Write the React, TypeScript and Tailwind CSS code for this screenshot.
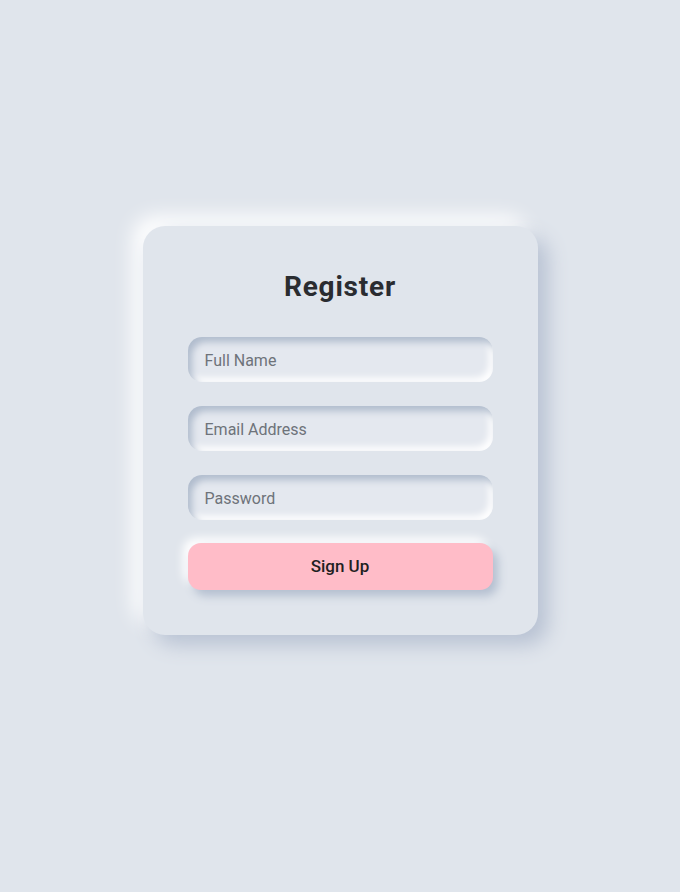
import React from 'react';

const fields = ['Full Name', 'Email Address', 'Password'];

export default function App() {
  return (
    <div className="min-h-[892px] w-full bg-[#e0e5ec] flex justify-center pt-[226px] font-['Roboto',sans-serif]">
      <div className="w-[395px] h-[409px] rounded-[22px] bg-[#e0e5ec] px-[45px] pt-[43px] shadow-[10px_10px_20px_#b8c2d3,-10px_-10px_20px_#ffffff]">
        <h1 className="text-center text-[28px] leading-[36px] font-bold tracking-[0.8px] text-[#2a2c30]">
          Register
        </h1>
        <div className="mt-[32px] flex flex-col gap-[24px]">
          {fields.map((f) => (
            <input
              key={f}
              type={f === 'Password' ? 'password' : 'text'}
              placeholder={f}
              className="h-[45px] w-full rounded-[14px] bg-[#e4e8ef] px-[17px] pt-[1px] text-[16px] text-[#555a61] placeholder:text-[#6e737a] outline-none shadow-[inset_4px_5px_7px_#b0bccd,inset_-4px_-4px_7px_#ffffff]"
            />
          ))}
          <button className="-mt-[1px] h-[47px] w-full rounded-[13px] bg-[#ffbcc8] text-[17px] font-medium text-[#1f1f22] shadow-[5px_6px_10px_#b4bfd0,-5px_-5px_10px_#ffffff]">
            Sign Up
          </button>
        </div>
      </div>
    </div>
  );
}
